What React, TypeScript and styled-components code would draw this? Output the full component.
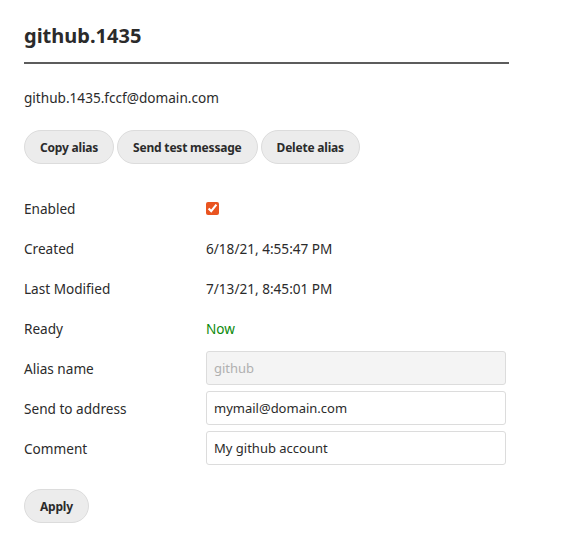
import styled, { createGlobalStyle } from 'styled-components'

const GlobalStyle = createGlobalStyle`
  body {
    margin: 0;
    background: #fff;
    color: #2b2b2b;
    font-family: 'Noto Sans', 'Open Sans', sans-serif;
    font-size: 13.6px;
  }
`

const fields = [
  { label: 'Alias name', value: 'github', disabled: true },
  { label: 'Send to address', value: 'mymail@domain.com' },
  { label: 'Comment', value: 'My github account' },
]

export default function App() {
  return (
    <>
      <GlobalStyle />
      <Page>
        <Title>github.1435</Title>
        <Address>github.1435.fccf@domain.com</Address>
        <Actions>
          <Button>Copy alias</Button>
          <Button>Send test message</Button>
          <Button>Delete alias</Button>
        </Actions>
        <Details>
          <Label>Enabled</Label>
          <Value>
            <Check type="checkbox" defaultChecked />
          </Value>
          <Label>Created</Label>
          <Value>6/18/21, 4:55:47 PM</Value>
          <Label>Last Modified</Label>
          <Value>7/13/21, 8:45:01 PM</Value>
          <Label>Ready</Label>
          <Value $ok>Now</Value>
          {fields.map((f) => (
            <Row key={f.label}>
              <Label>{f.label}</Label>
              <Value>
                <Input defaultValue={f.value} disabled={f.disabled} />
              </Value>
            </Row>
          ))}
        </Details>
        <Footer>
          <Button>Apply</Button>
        </Footer>
      </Page>
    </>
  )
}

const Page = styled.div`
  padding: 16px 24px;
  width: 485px;
`

const Title = styled.h1`
  margin: 6px 0 0;
  padding-bottom: 13px;
  font-size: 20px;
  font-weight: 700;
  border-bottom: 2px solid #5c5c5c;
`

const Address = styled.p`
  margin: 24px 0 0;
  line-height: 20px;
`

const Actions = styled.div`
  display: flex;
  gap: 3px;
  margin-top: 22px;
`

const Button = styled.button`
  height: 34px;
  padding: 0 15px;
  border: 1px solid #dcdcdc;
  border-radius: 17px;
  background: #ececec;
  color: #2b2b2b;
  font-family: inherit;
  font-size: 12px;
  font-weight: 700;
  letter-spacing: -0.2px;
  cursor: pointer;
`

const Details = styled.div`
  display: grid;
  grid-template-columns: 182px 300px;
  grid-auto-rows: 40px;
  align-items: center;
  margin-top: 24px;
`

const Row = styled.div`
  display: contents;
`

const Label = styled.div``

const Value = styled.div<{ $ok?: boolean }>`
  display: flex;
  align-items: center;
  color: ${({ $ok }) => ($ok ? '#0c8a0c' : 'inherit')};
`

const Check = styled.input`
  margin: 0;
  width: 13px;
  height: 13px;
  accent-color: #e95420;
`

const Input = styled.input`
  box-sizing: border-box;
  width: 300px;
  height: 34px;
  padding: 0 7px;
  border: 1px solid #dcdcdc;
  border-radius: 3px;
  background: #fff;
  color: #2b2b2b;
  font-family: inherit;
  font-size: 13px;

  &:disabled {
    background: #f4f4f4;
    color: #b0b0b0;
  }
`

const Footer = styled.div`
  margin-top: 21px;
`
